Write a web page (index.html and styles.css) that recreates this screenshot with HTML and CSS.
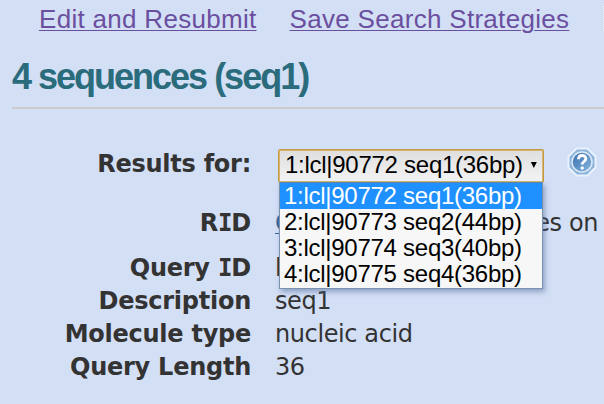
FILE: index.html
```
<!DOCTYPE html>
<html lang="en">
<head>
<meta charset="utf-8">
<title>4 sequences (seq1)</title>
<link rel="stylesheet" href="styles.css">
</head>
<body>
<nav class="actions">
<a class="edit" href="#">Edit and Resubmit</a>
<a class="save" href="#">Save Search Strategies</a>
<span class="divider"></span>
</nav>
<h1><span class="title">4 sequences (seq1)</span></h1>
<dl class="details">
<dt class="results"><span class="results-label">Results for:</span></dt>
<dd class="picker">
<div class="select"><span class="current">1:lcl|90772 seq1(36bp)</span><i class="arrow"></i>
<ul class="menu">
<li class="active"><span>1:lcl|90772 seq1(36bp)</span></li>
<li><span>2:lcl|90773 seq2(44bp)</span></li>
<li><span>3:lcl|90774 seq3(40bp)</span></li>
<li><span>4:lcl|90775 seq4(36bp)</span></li>
</ul>
</div>
<svg class="help" viewBox="0 0 30 30" width="30" height="30">
<defs><linearGradient id="g" x1="0" y1="0" x2="1" y2="1"><stop offset="0" stop-color="#3a6ea9"/><stop offset=".5" stop-color="#5d91c5"/><stop offset="1" stop-color="#8dbde3"/></linearGradient></defs>
<path d="M9.5 1.5h11l8 8v11l-8 8h-11l-8-8v-11z" fill="#8fb4da" stroke="#e8f2fc" stroke-width="2"/>
<circle cx="15" cy="15" r="10" fill="url(#g)" stroke="#dceafa" stroke-width="1.5"/>
<path d="M11.5 12.2c0-5 7.4-4.7 7.4-.6 0 3-3.7 2.8-3.7 6" fill="none" stroke="#fff" stroke-width="2.8"/>
<circle cx="15.2" cy="21" r="1.7" fill="#fff"/>
</svg>
</dd>
<dt class="rid">R<b class="i">I</b>D</dt>
<dd class="rid"><a class="request" href="#">C</a><span class="expires">es on</span></dd>
<dt>Query <b class="i">I</b>D</dt><dd>l</dd>
<dt>Description</dt><dd>seq1</dd>
<dt>Molecule type</dt><dd>nucleic acid</dd>
<dt>Query Length</dt><dd>36</dd>
</dl>
</body>
</html>
```
FILE: styles.css
```
* { box-sizing: border-box; }
body { margin: 0; width: 604px; height: 404px; overflow: hidden; background: #d3dff5; color: #333; font-family: "DejaVu Sans", sans-serif; }
.actions { display: flex; height: 48px; padding: 4px 0 0 39px; font: 26px/30px "Liberation Sans", sans-serif; letter-spacing: .3px; white-space: nowrap; }
.actions a { color: #6b4f9f; text-decoration-thickness: 1px; text-underline-offset: 2px; }
.save { margin-left: 33px; }
.divider { margin: 2px 0 0 34px; height: 25px; border-left: 1px dotted #eef3fc; }
h1 { margin: 0 0 0 12px; height: 61px; border-bottom: 2px solid #ccc; color: #2a6b7c; font: bold 36px/58px "Liberation Sans", sans-serif; letter-spacing: -2px; white-space: nowrap; }
.details { margin: 0; display: grid; grid-template-columns: 251px 1fr; grid-template-rows: 79px 63px 33px 33px 33px 33px; column-gap: 24px; font-size: 24px; letter-spacing: -.4px; line-height: 35px; white-space: nowrap; }
dt { text-align: right; font-weight: bold; letter-spacing: -.25px; }
dd { margin: 0; }
.i { font-family: "DejaVu Sans Mono", monospace; letter-spacing: -1px; line-height: 1; }
.results { padding-top: 38px; }
.picker { display: flex; padding: 40px 0 0 3px; }
.rid { padding-top: 18px; }
dd.rid { display: flex; justify-content: space-between; padding-right: 6px; }
.request { color: #336699; text-decoration-thickness: 1px; text-underline-offset: 2px; }
.select { position: relative; width: 266px; height: 34px; padding-left: 6px; border: 1px solid #c4983f; border-radius: 2px; box-shadow: inset 0 0 0 1px #d8b66f; background: linear-gradient(#dedede, #f4f4f4); color: #000; font: 24px/29px "Liberation Sans", sans-serif; letter-spacing: -.27px; display: flex; }
.arrow { margin: 12px 0 0 8px; width: 6px; height: 6px; background: #000; clip-path: polygon(0 0, 100% 0, 50% 100%); }
.menu { position: absolute; left: 0; top: 32px; width: 264px; height: 107px; margin: 0; padding: 0; list-style: none; border: 1px solid #7892b0; border-top-color: #64869f; background: #f7f7f7; box-shadow: 2px 3px 5px #536b9a88; line-height: 26px; }
.menu li { height: 26px; padding-left: 4px; }
.active { background: #1e90ff; color: #fff; }
.help { margin: -2px 0 0 23px; }
```
